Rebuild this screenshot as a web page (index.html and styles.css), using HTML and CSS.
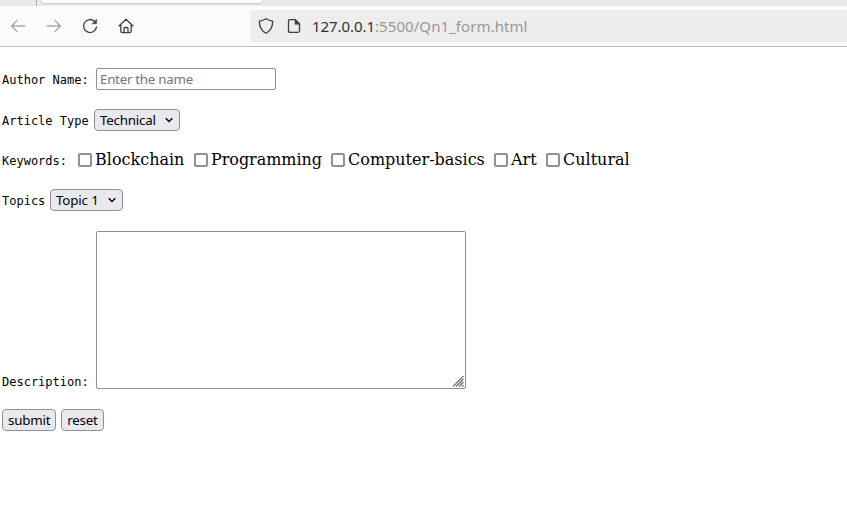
FILE: index.html
```html
<!DOCTYPE html>
<html lang="en">
<head>
<meta charset="utf-8">
<title>Article form</title>
<link rel="stylesheet" href="styles.css">
</head>
<body>
<header class="browser">
  <div class="tabs"><span class="tab-divider"></span><span class="active-tab"></span></div>
  <nav class="toolbar">
    <svg class="icon muted" viewBox="0 0 16 16"><path d="M15 8H1.5M7 2.5L1.5 8L7 13.5"/></svg>
    <svg class="icon muted" viewBox="0 0 16 16"><path d="M1 8h13.5M9 2.5L14.5 8L9 13.5"/></svg>
    <svg class="icon" viewBox="0 0 16 16"><path d="M12.4 3.2A6.5 6.5 0 1 0 14.5 8.8"/><path class="solid" d="M14.6 1.4v4.4h-4.4z"/></svg>
    <svg class="icon home" viewBox="0 0 16 16"><path d="M1 8L8 1.2L15 8M2.8 6.5v6.6q0 1.6 1.6 1.6h7.2q1.6 0 1.6-1.6V6.5M6 14.5v-4q0-1 1-1h2q1 0 1 1v4"/></svg>
    <div class="address">
      <svg class="icon" viewBox="0 0 16 16"><path d="M8 .8Q11 2.7 14.6 3.1C14.8 8.6 13.3 12.4 8 15.3C2.7 12.4 1.2 8.6 1.4 3.1Q5 2.7 8 .8z"/></svg>
      <svg class="icon page-icon" viewBox="0 0 16 16"><path d="M4 1.7h5.4l4.1 4.1v7q0 1.5-1.5 1.5H4q-1.5 0-1.5-1.5V3.2Q2.5 1.7 4 1.7z"/><path class="solid" d="M9 1.5v4.8h4.7z"/></svg>
      <span class="url"><span class="host">127.0.0.1</span><span class="path">:5500/Qn1_form.html</span></span>
    </div>
  </nav>
</header>
<form class="form">
  <div class="row"><label class="label wide" for="author">Author Name:</label><input class="text-input" id="author" type="text" placeholder="Enter the name"></div>
  <div class="row"><span class="label type">Article Type</span><button type="button" class="select technical"><span>Technical</span><svg class="chevron" viewBox="0 0 8 6"><path d="M.7 1.2L4 4.5L7.3 1.2"/></svg></button></div>
  <div class="row keywords"><span class="label keyword-label">Keywords:</span>
    <label class="option blockchain"><input type="checkbox">Blockchain</label>
    <label class="option programming"><input type="checkbox">Programming</label>
    <label class="option basics"><input type="checkbox">Computer-basics</label>
    <label class="option art"><input type="checkbox">Art</label>
    <label class="option"><input type="checkbox">Cultural</label>
  </div>
  <div class="row"><span class="label topics">Topics</span><button type="button" class="select topic"><span>Topic 1</span><svg class="chevron" viewBox="0 0 8 6"><path d="M.7 1.2L4 4.5L7.3 1.2"/></svg></button></div>
  <div class="row description"><label class="label wide" for="description">Description:</label><div class="area"><textarea id="description"></textarea><svg class="grip" viewBox="0 0 11 11"><path d="M0 10.5L10.5 0M3 10.5L10.5 3M6 10.5L10.5 6M9 10.5L10.5 9"/></svg></div></div>
  <div class="row actions"><button type="button" class="button submit">submit</button><button type="button" class="button reset">reset</button></div>
</form>
</body>
</html>
```
FILE: styles.css
```css
* { box-sizing: border-box; }
body { margin: 0; background: #fff; color: #000; height: 513px; overflow: hidden; }
.tabs { height: 6px; background: #eaeaea; display: flex; overflow: hidden; }
.tab-divider { width: 1px; height: 6px; margin-left: 36px; background: #aaa; }
.active-tab { width: 221px; height: 3px; margin-left: 4px; background: #fff; border-radius: 0 0 4px 4px; box-shadow: 0 0 2px 0 #888; }
.toolbar { height: 41px; background: #fbfbfb; border-bottom: 1px solid #bfbfbf; display: flex; align-items: center; padding-left: 10px; gap: 20px; }
.icon { width: 16px; height: 16px; flex: none; fill: none; stroke: #3f3f43; stroke-width: 1.3; stroke-linecap: round; stroke-linejoin: round; }
.muted { stroke: #aaa; }
.home { margin-left: -.5px; }
.solid { fill: #3f3f43; stroke-width: .5; }
.address { margin-left: 96.5px; flex: 1; height: 32px; background: #ededed; border-radius: 4px 0 0 4px; display: flex; align-items: center; padding-left: 8px; }
.page-icon { margin-left: 12px; }
.url { margin-left: 10px; font: 15px "Noto Sans", sans-serif; white-space: nowrap; }
.host { color: #333; letter-spacing: -.06px; }
.path { color: #999; letter-spacing: .07px; }
.form { padding: 21px 0 0 2px; }
.row { height: 22px; display: flex; align-items: center; margin-bottom: 18px; }
.row:first-child { margin-bottom: 19px; }
.label { font: 12px/14px "DejaVu Sans Mono", monospace; flex: none; white-space: pre; padding-top: 2px; }
.wide { width: 94px; }
.type { width: 92px; }
.topics { width: 48px; }
.keyword-label { width: 76px; }
.text-input { width: 180px; height: 22px; border: 1px solid #8f8f9d; border-radius: 2px; padding: 0 3px; font: 13.33px "Noto Sans", sans-serif; letter-spacing: -.27px; outline: 0; }
.text-input::placeholder { color: #757575; opacity: 1; }
.select, .button { height: 22px; border: 1px solid #8f8f9d; border-radius: 4px; background: #e9e9ed; color: #000; font: 13.33px/18px "Noto Sans", sans-serif; padding: 0 5px; white-space: nowrap; }
.select { display: flex; justify-content: space-between; align-items: center; }
.technical { width: 86px; letter-spacing: -.2px; }
.topic { width: 73px; letter-spacing: -.15px; }
.chevron { width: 8px; height: 6px; margin-right: 1px; fill: none; stroke: #000; stroke-width: 1.4; }
.option { display: flex; align-items: center; font: 16px/19px "DejaVu Serif", serif; white-space: nowrap; margin-bottom: 2px; }
.option input { appearance: none; width: 14px; height: 14px; border: 2px solid #8f8f9d; border-radius: 2px; background: #fff; margin: 2px 3px 0 0; }
.blockchain { width: 116px; }
.programming { width: 137px; letter-spacing: -.05px; }
.basics { width: 163px; }
.art { width: 52px; }
.row.description { height: 158px; margin: 20px 0; align-items: flex-end; }
.area { width: 370px; height: 158px; position: relative; }
.area textarea { display: block; width: 100%; height: 100%; border: 1px solid #8f8f9d; border-radius: 2px; resize: none; background: #fff; outline: 0; }
.grip { position: absolute; right: 2px; bottom: 2px; width: 11px; height: 11px; stroke: #666; stroke-width: 1.1; }
.actions { gap: 5px; }
.submit { width: 54px; }
.reset { width: 43px; }
.button { letter-spacing: -.2px; }
```
